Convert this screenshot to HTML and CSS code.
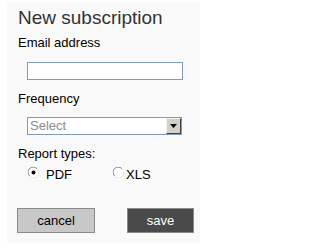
FILE: index.html
```html
<!DOCTYPE html>
<html>
<head>
<meta charset="utf-8">
<link rel="stylesheet" href="styles.css">
</head>
<body>
<div class="panel">
  <h1 class="title">New subscription</h1>
  <div class="label">Email address</div>
  <div class="field field-email"><div class="textbox"></div></div>
  <div class="label label-freq">Frequency</div>
  <div class="field">
    <div class="select">
      <span class="select-text">Select</span>
      <span class="select-btn">
        <svg width="7" height="4" viewBox="0 0 7 4"><path d="M0 0H7L3.5 4Z" fill="#000"/></svg>
      </span>
    </div>
  </div>
  <div class="label label-report">Report types:</div>
  <div class="radios">
    <div class="option option-pdf">
      <svg class="radio" width="11" height="11" viewBox="0 0 11 11">
        <circle cx="5.5" cy="5.5" r="5" fill="#fff"/>
        <path d="M1.6 8.9A5 5 0 0 1 8.9 1.6" stroke="#808080" stroke-width="1" fill="none"/>
        <path d="M9.4 2.1A5 5 0 0 1 2.1 9.4" stroke="#e4e4e4" stroke-width="1" fill="none"/>
        <circle cx="5.5" cy="5.5" r="2" fill="#000"/>
      </svg>
      <span>PDF</span>
    </div>
    <div class="option option-xls">
      <svg class="radio" width="11" height="11" viewBox="0 0 11 11">
        <circle cx="5.5" cy="5.5" r="5" fill="#fff"/>
        <path d="M1.6 8.9A5 5 0 0 1 8.9 1.6" stroke="#808080" stroke-width="1" fill="none"/>
        <path d="M9.4 2.1A5 5 0 0 1 2.1 9.4" stroke="#e4e4e4" stroke-width="1" fill="none"/>
      </svg>
      <span>XLS</span>
    </div>
  </div>
  <div class="buttons">
    <div class="btn btn-cancel">cancel</div>
    <div class="btn btn-save">save</div>
  </div>
</div>
</body>
</html>
```
FILE: styles.css
```css
html, body {
  margin: 0;
  padding: 0;
  background: #ffffff;
}
body {
  font-family: "Liberation Sans", Arial, sans-serif;
  color: #000;
}
.panel {
  margin: 3px 0 0 7px;
  width: 193px;
  height: 240px;
  background: #f9f9f9;
  padding: 4px 0 0 11px;
  box-sizing: border-box;
  display: flex;
  flex-direction: column;
}
.title {
  margin: 0;
  font-size: 19px;
  line-height: 22px;
  font-weight: normal;
  color: #333333;
}
.label {
  font-size: 13px;
  line-height: 15px;
  margin-top: 6px;
}
.field {
  margin-top: 11px;
  padding-left: 9px;
}
.field-email {
  margin-top: 12px;
}
.textbox {
  width: 156px;
  height: 18px;
  box-sizing: border-box;
  border: 1px solid #7f9db9;
  background: #fff;
}
.label-freq {
  margin-top: 11px;
}
.select {
  width: 155px;
  height: 18px;
  box-sizing: border-box;
  border: 1px solid #7f9db9;
  background: #fff;
  display: flex;
  align-items: stretch;
}
.select-text {
  flex: 1;
  font-size: 13px;
  line-height: 16px;
  color: #8c8c8c;
  padding-left: 2px;
}
.select-btn {
  width: 15px;
  box-sizing: border-box;
  background: #d4d0c8;
  border-top: 1px solid #f4f3ee;
  border-left: 1px solid #f4f3ee;
  border-right: 1px solid #404040;
  border-bottom: 1px solid #404040;
  display: flex;
  align-items: center;
  justify-content: center;
}
.label-report {
  margin-top: 11px;
}
.radios {
  display: flex;
  margin-top: 6px;
  padding-left: 10px;
  font-size: 13px;
  line-height: 15px;
}
.option {
  display: flex;
  align-items: flex-start;
  gap: 7px;
}
.option-pdf {
  width: 85px;
}
.option-xls {
  gap: 2px;
}
.radio {
  display: block;
}
.buttons {
  display: flex;
  justify-content: space-between;
  margin-top: 26px;
  margin-left: -1px;
  width: 177px;
}
.btn {
  height: 25px;
  box-sizing: border-box;
  border: 1px solid #8a8a8a;
  font-size: 13px;
  line-height: 23px;
  text-align: center;
}
.btn-cancel {
  width: 78px;
  background: #c8c8c8;
  color: #000;
}
.btn-save {
  width: 67px;
  background: #4a4a4a;
  color: #fff;
}
```
